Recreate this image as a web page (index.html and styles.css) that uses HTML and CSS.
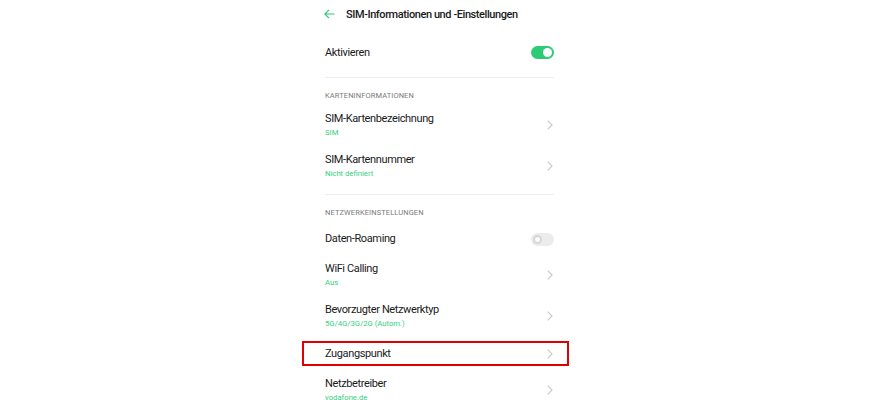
FILE: index.html
```html
<!DOCTYPE html>
<html lang="de">
<head>
<meta charset="utf-8">
<title>SIM-Informationen und -Einstellungen</title>
<link rel="stylesheet" href="styles.css">
</head>
<body>
<div class="page">
  <header class="header">
    <svg class="back" width="11" height="10" viewBox="0 0 11 10"><path d="M10.5 5H1M5 0.8L0.9 5 5 9.2" fill="none" stroke="#2dc978" stroke-width="1.2"/></svg>
    <h1 class="title">SIM-Informationen und -Einstellungen</h1>
  </header>

  <div class="row row-main">
    <span class="label">Aktivieren</span>
    <span class="toggle on"><span class="knob"></span></span>
  </div>
  <div class="divider"></div>

  <div class="section">KARTENINFORMATIONEN</div>
  <div class="row row-two">
    <div class="text"><div class="label">SIM-Kartenbezeichnung</div><div class="sub">SIM</div></div>
    <svg class="chev" width="6" height="10" viewBox="0 0 6 10"><path d="M0.7 0.7L5 5 0.7 9.3" fill="none" stroke="#c9c9c9" stroke-width="1.1"/></svg>
  </div>
  <div class="row row-two">
    <div class="text"><div class="label">SIM-Kartennummer</div><div class="sub">Nicht definiert</div></div>
    <svg class="chev" width="6" height="10" viewBox="0 0 6 10"><path d="M0.7 0.7L5 5 0.7 9.3" fill="none" stroke="#c9c9c9" stroke-width="1.1"/></svg>
  </div>
  <div class="divider divider-gap"></div>

  <div class="section section-net">NETZWERKEINSTELLUNGEN</div>
  <div class="row row-toggle">
    <span class="label">Daten-Roaming</span>
    <span class="toggle off"><span class="knob"></span></span>
  </div>
  <div class="row row-two">
    <div class="text"><div class="label">WiFi Calling</div><div class="sub">Aus</div></div>
    <svg class="chev" width="6" height="10" viewBox="0 0 6 10"><path d="M0.7 0.7L5 5 0.7 9.3" fill="none" stroke="#c9c9c9" stroke-width="1.1"/></svg>
  </div>
  <div class="row row-two">
    <div class="text"><div class="label">Bevorzugter Netzwerktyp</div><div class="sub">5G/4G/3G/2G (Autom.)</div></div>
    <svg class="chev" width="6" height="10" viewBox="0 0 6 10"><path d="M0.7 0.7L5 5 0.7 9.3" fill="none" stroke="#c9c9c9" stroke-width="1.1"/></svg>
  </div>
  <div class="row row-single highlighted">
    <span class="label">Zugangspunkt</span>
    <svg class="chev" width="6" height="10" viewBox="0 0 6 10"><path d="M0.7 0.7L5 5 0.7 9.3" fill="none" stroke="#c9c9c9" stroke-width="1.1"/></svg>
  </div>
  <div class="row row-two">
    <div class="text"><div class="label">Netzbetreiber</div><div class="sub">vodafone.de</div></div>
    <svg class="chev" width="6" height="10" viewBox="0 0 6 10"><path d="M0.7 0.7L5 5 0.7 9.3" fill="none" stroke="#c9c9c9" stroke-width="1.1"/></svg>
  </div>
</div>
</body>
</html>
```

FILE: styles.css
```css
html, body {
  margin: 0;
  padding: 0;
  background: #ffffff;
  overflow: hidden;
}

.page {
  width: 229px;
  margin: 0 auto;
  font-family: Roboto, "Noto Sans", sans-serif;
  color: #1c1c1c;
}

.header {
  display: flex;
  align-items: center;
  height: 28px;
  gap: 11px;
  margin-left: -1px;
}

.title {
  margin: 0;
  font-size: 11px;
  letter-spacing: -0.42px;
  font-weight: 500;
  color: #1a1a1a;
  white-space: nowrap;
}

.row {
  display: flex;
  align-items: center;
  justify-content: space-between;
  position: relative;
}

.row-main {
  height: 49px;
}

.row-toggle {
  height: 32px;
}

.row-two {
  padding: 6px 0 7px;
  height: 28px;
}

.row-single {
  height: 33px;
}

.label {
  font-size: 11px;
  letter-spacing: -0.38px;
  line-height: 16px;
  color: #1a1a1a;
  white-space: nowrap;
}

.sub {
  font-size: 7.7px;
  line-height: 12px;
  color: #35cf80;
  white-space: nowrap;
}

.chev {
  margin-right: 1px;
  flex: none;
}

.divider {
  height: 1px;
  background: #ededed;
}

.divider-gap {
  margin-top: 7px;
}

.section {
  padding: 13px 0 4px;
  font-size: 7.5px;
  line-height: 10px;
  color: #7a7a7a;
  letter-spacing: 0.1px;
}

.section-net {
  padding-bottom: 5px;
}

.toggle {
  width: 23px;
  height: 13px;
  border-radius: 7px;
  display: flex;
  align-items: center;
  box-sizing: border-box;
  padding: 0 2px;
  flex: none;
}

.toggle.on {
  background: #2dcb75;
  justify-content: flex-end;
}

.toggle.off {
  background: #ececec;
  justify-content: flex-start;
}

.toggle .knob {
  width: 9px;
  height: 9px;
  border-radius: 50%;
  background: #ffffff;
  box-sizing: border-box;
}

.toggle.off .knob {
  border: 2px solid #d6d6d6;
  background: #fafafa;
}

.highlighted::after {
  content: "";
  position: absolute;
  left: -23px;
  right: -15px;
  top: 4px;
  bottom: 4px;
  border: 2px solid #e10000;
}
```
